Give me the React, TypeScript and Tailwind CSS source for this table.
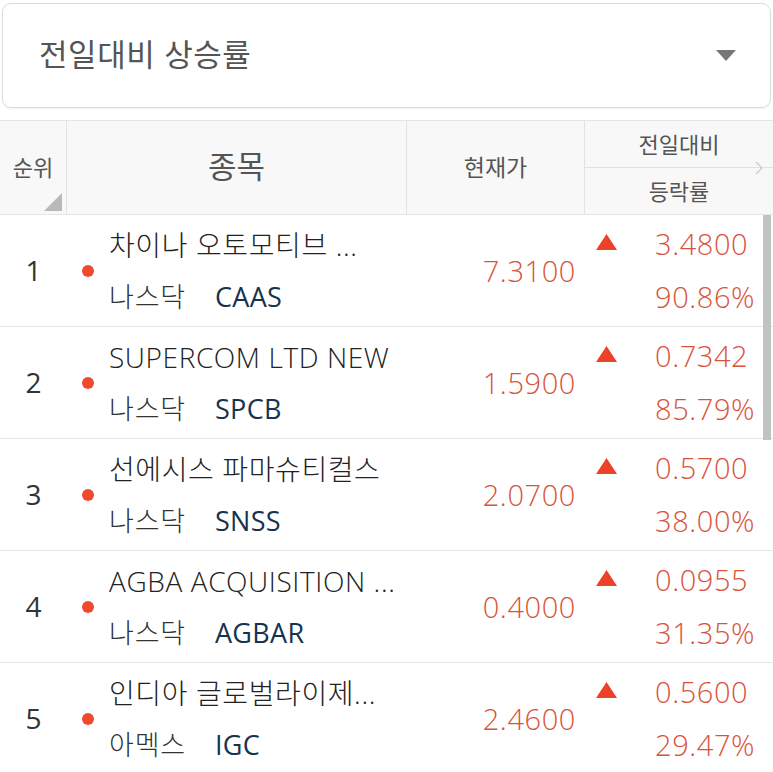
const rows = [
  { rank: 1, name: "차이나 오토모티브 ...", market: "나스닥", ticker: "CAAS", price: "7.3100", diff: "3.4800", rate: "90.86%" },
  { rank: 2, name: "SUPERCOM LTD NEW", market: "나스닥", ticker: "SPCB", price: "1.5900", diff: "0.7342", rate: "85.79%" },
  { rank: 3, name: "선에시스 파마슈티컬스", market: "나스닥", ticker: "SNSS", price: "2.0700", diff: "0.5700", rate: "38.00%" },
  { rank: 4, name: "AGBA ACQUISITION ...", market: "나스닥", ticker: "AGBAR", price: "0.4000", diff: "0.0955", rate: "31.35%" },
  { rank: 5, name: "인디아 글로벌라이제...", market: "아멕스", ticker: "IGC", price: "2.4600", diff: "0.5600", rate: "29.47%" },
];

const font = "font-['Open_Sans','Noto_Sans_CJK_KR',sans-serif]";

function Row({ r }: { r: (typeof rows)[number] }) {
  return (
    <div className="flex h-[112px] border-b border-[#e6e6e6] bg-white">
      <div className="w-[67px] flex items-center justify-center text-[28px] text-[#333] pb-[2px]">{r.rank}</div>
      <div className="w-[340px] flex items-center">
        <span className="ml-[15px] w-[12px] h-[12px] rounded-full bg-[#ee4a30]" />
        <div className="ml-[15px] flex flex-col">
          <div className="h-[54px] flex items-center text-[28px] font-light text-[#222] tracking-[0.6px] whitespace-nowrap">{r.name}</div>
          <div className="h-[52px] flex items-center text-[27px] whitespace-nowrap">
            <span className="text-[#333] w-[106px] font-light tracking-[0.8px]">{r.market}</span>
            <span className="text-[#16334f] tracking-[0.3px]">{r.ticker}</span>
          </div>
        </div>
      </div>
      <div className="w-[178px] flex items-center justify-end pr-[9px] text-[29px] font-light tracking-[0.6px] text-[#d9533b]">{r.price}</div>
      <div className="flex-1 flex">
        <div className="w-[70px] pt-[19px] pl-[11px]">
          <svg width="21" height="16" viewBox="0 0 21 16">
            <polygon points="10.5,0 21,16 0,16" fill="#ec4228" />
          </svg>
        </div>
        <div className="flex flex-col text-[29px] font-light tracking-[0.6px] text-[#d9533b]">
          <div className="h-[56px] flex items-center pt-[2px]">{r.diff}</div>
          <div className="h-[52px] flex items-center">{r.rate}</div>
        </div>
      </div>
    </div>
  );
}

export default function App() {
  return (
    <div className={`${font} relative w-[773px] h-[772px] overflow-hidden bg-white`}>
      <div className="px-[2px] pt-[3px]">
        <div className="h-[105px] rounded-[9px] border border-[#dcdcdc] shadow-[0_1px_2px_rgba(0,0,0,0.06)] flex items-center justify-between pl-[36px] pr-[34px]">
          <span className="text-[31px] text-[#555] tracking-[0.6px] pb-[3px]">전일대비 상승률</span>
          <svg width="20" height="11" viewBox="0 0 20 11">
            <polygon points="0,0 20,0 10,11" fill="#777" />
          </svg>
        </div>
      </div>

      <div className="mt-[12px] flex h-[95px] bg-[#f8f8f8] border-y border-[#e4e4e4]">
        <div className="relative w-[67px] border-r border-[#e2e2e2] flex items-center justify-center text-[22px] text-[#555] pb-[1px]">
          순위
          <svg className="absolute right-[4px] bottom-[3px]" width="18" height="18" viewBox="0 0 18 18">
            <polygon points="18,0 18,18 0,18" fill="#b9b9b9" />
          </svg>
        </div>
        <div className="w-[340px] border-r border-[#e2e2e2] flex items-center justify-center text-[31px] text-[#555] pb-[2px]">종목</div>
        <div className="w-[178px] border-r border-[#e2e2e2] flex items-center justify-center text-[23px] text-[#555] pb-[1px]">현재가</div>
        <div className="relative flex-1 flex flex-col">
          <div className="h-[47px] border-b border-[#e2e2e2] flex items-center justify-center text-[22px] text-[#555]">전일대비</div>
          <div className="flex-1 flex items-center justify-center text-[22px] text-[#555]">등락률</div>
          <svg className="absolute right-[10px] top-[40px]" width="8" height="14" viewBox="0 0 8 14">
            <polyline points="1,1 7,7 1,13" fill="none" stroke="#c8c8c8" strokeWidth="1.2" />
          </svg>
        </div>
      </div>

      {rows.map((r) => (
        <Row key={r.rank} r={r} />
      ))}

      <div className="absolute right-[2px] top-[215px] w-[8px] h-[225px] bg-[#c2c2c2]" />
    </div>
  );
}
